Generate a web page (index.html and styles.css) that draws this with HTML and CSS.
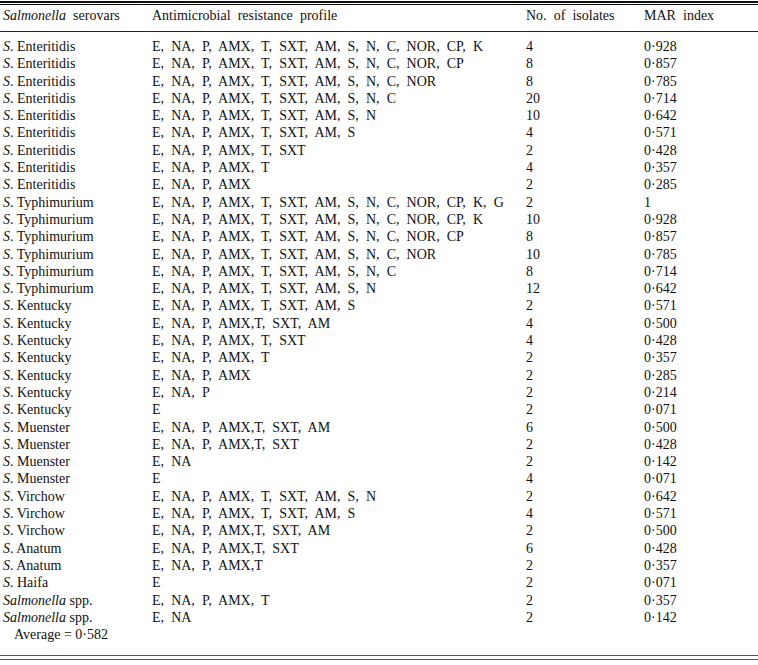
FILE: index.html
```html
<!DOCTYPE html>
<html>
<head>
<meta charset="utf-8">
<link rel="stylesheet" href="styles.css">
</head>
<body>
<div class="page">
  <div class="rule-top"></div>
  <table class="mar">
    <thead>
      <tr>
        <th class="c1"><i>Salmonella</i> serovars</th>
        <th class="c2">Antimicrobial resistance profile</th>
        <th class="c3">No. of isolates</th>
        <th class="c4">MAR index</th>
      </tr>
    </thead>
    <tbody>
      <tr class="first"><td><i>S</i>. Enteritidis</td><td>E, NA, P, AMX, T, SXT, AM, S, N, C, NOR, CP, K</td><td>4</td><td>0·928</td></tr>
      <tr><td><i>S</i>. Enteritidis</td><td>E, NA, P, AMX, T, SXT, AM, S, N, C, NOR, CP</td><td>8</td><td>0·857</td></tr>
      <tr><td><i>S</i>. Enteritidis</td><td>E, NA, P, AMX, T, SXT, AM, S, N, C, NOR</td><td>8</td><td>0·785</td></tr>
      <tr><td><i>S</i>. Enteritidis</td><td>E, NA, P, AMX, T, SXT, AM, S, N, C</td><td>20</td><td>0·714</td></tr>
      <tr><td><i>S</i>. Enteritidis</td><td>E, NA, P, AMX, T, SXT, AM, S, N</td><td>10</td><td>0·642</td></tr>
      <tr><td><i>S</i>. Enteritidis</td><td>E, NA, P, AMX, T, SXT, AM, S</td><td>4</td><td>0·571</td></tr>
      <tr><td><i>S</i>. Enteritidis</td><td>E, NA, P, AMX, T, SXT</td><td>2</td><td>0·428</td></tr>
      <tr><td><i>S</i>. Enteritidis</td><td>E, NA, P, AMX, T</td><td>4</td><td>0·357</td></tr>
      <tr><td><i>S</i>. Enteritidis</td><td>E, NA, P, AMX</td><td>2</td><td>0·285</td></tr>
      <tr><td><i>S</i>. Typhimurium</td><td>E, NA, P, AMX, T, SXT, AM, S, N, C, NOR, CP, K, G</td><td>2</td><td>1</td></tr>
      <tr><td><i>S</i>. Typhimurium</td><td>E, NA, P, AMX, T, SXT, AM, S, N, C, NOR, CP, K</td><td>10</td><td>0·928</td></tr>
      <tr><td><i>S</i>. Typhimurium</td><td>E, NA, P, AMX, T, SXT, AM, S, N, C, NOR, CP</td><td>8</td><td>0·857</td></tr>
      <tr><td><i>S</i>. Typhimurium</td><td>E, NA, P, AMX, T, SXT, AM, S, N, C, NOR</td><td>10</td><td>0·785</td></tr>
      <tr><td><i>S</i>. Typhimurium</td><td>E, NA, P, AMX, T, SXT, AM, S, N, C</td><td>8</td><td>0·714</td></tr>
      <tr><td><i>S</i>. Typhimurium</td><td>E, NA, P, AMX, T, SXT, AM, S, N</td><td>12</td><td>0·642</td></tr>
      <tr><td><i>S</i>. Kentucky</td><td>E, NA, P, AMX, T, SXT, AM, S</td><td>2</td><td>0·571</td></tr>
      <tr><td><i>S</i>. Kentucky</td><td>E, NA, P, AMX,T, SXT, AM</td><td>4</td><td>0·500</td></tr>
      <tr><td><i>S</i>. Kentucky</td><td>E, NA, P, AMX, T, SXT</td><td>4</td><td>0·428</td></tr>
      <tr><td><i>S</i>. Kentucky</td><td>E, NA, P, AMX, T</td><td>2</td><td>0·357</td></tr>
      <tr><td><i>S</i>. Kentucky</td><td>E, NA, P, AMX</td><td>2</td><td>0·285</td></tr>
      <tr><td><i>S</i>. Kentucky</td><td>E, NA, P</td><td>2</td><td>0·214</td></tr>
      <tr><td><i>S</i>. Kentucky</td><td>E</td><td>2</td><td>0·071</td></tr>
      <tr><td><i>S</i>. Muenster</td><td>E, NA, P, AMX,T, SXT, AM</td><td>6</td><td>0·500</td></tr>
      <tr><td><i>S</i>. Muenster</td><td>E, NA, P, AMX,T, SXT</td><td>2</td><td>0·428</td></tr>
      <tr><td><i>S</i>. Muenster</td><td>E, NA</td><td>2</td><td>0·142</td></tr>
      <tr><td><i>S</i>. Muenster</td><td>E</td><td>4</td><td>0·071</td></tr>
      <tr><td><i>S</i>. Virchow</td><td>E, NA, P, AMX, T, SXT, AM, S, N</td><td>2</td><td>0·642</td></tr>
      <tr><td><i>S</i>. Virchow</td><td>E, NA, P, AMX, T, SXT, AM, S</td><td>4</td><td>0·571</td></tr>
      <tr><td><i>S</i>. Virchow</td><td>E, NA, P, AMX,T, SXT, AM</td><td>2</td><td>0·500</td></tr>
      <tr><td><i>S</i>. Anatum</td><td>E, NA, P, AMX,T, SXT</td><td>6</td><td>0·428</td></tr>
      <tr><td><i>S</i>. Anatum</td><td>E, NA, P, AMX,T</td><td>2</td><td>0·357</td></tr>
      <tr><td><i>S</i>. Haifa</td><td>E</td><td>2</td><td>0·071</td></tr>
      <tr><td><i>Salmonella</i> spp.</td><td>E, NA, P, AMX, T</td><td>2</td><td>0·357</td></tr>
      <tr><td><i>Salmonella</i> spp.</td><td>E, NA</td><td>2</td><td>0·142</td></tr>
      <tr class="avg"><td colspan="4">Average = 0·582</td></tr>
    </tbody>
  </table>
  <div class="rule-bottom"></div>
</div>
</body>
</html>
```
FILE: styles.css
```css
html, body {
  margin: 0;
  padding: 0;
  background: #ffffff;
}
.page {
  width: 758px;
  font-family: "Liberation Serif", "Times New Roman", serif;
  font-size: 14px;
  word-spacing: 3.6px;
  color: #111;
}
.rule-top {
  margin-top: 1px;
  height: 1px;
  border-top: 2px solid #111;
  border-bottom: 1px solid #111;
}
.mar {
  width: 100%;
  border-collapse: collapse;
  table-layout: fixed;
}
.mar th {
  font-weight: normal;
  text-align: left;
  padding: 0 0 4px 0;
  height: 22px;
  line-height: 22px;
  border-bottom: 1px solid #222;
}
.mar .c1 { width: 149px; padding-left: 3px; }
.mar .c2 { width: 374px; }
.mar .c3 { width: 118px; }
.mar td {
  padding: 0;
  height: 17.3px;
  line-height: 17.3px;
  white-space: nowrap;
}
.mar td:first-child { padding-left: 3px; word-spacing: 0; }
.mar tr.first td { padding-top: 6px; }
.mar tr.avg td { padding-left: 14px; word-spacing: 0; }
.rule-bottom {
  margin-top: 12px;
  height: 3px;
  border-top: 1px solid #555;
  border-bottom: 1px solid #555;
}
```
